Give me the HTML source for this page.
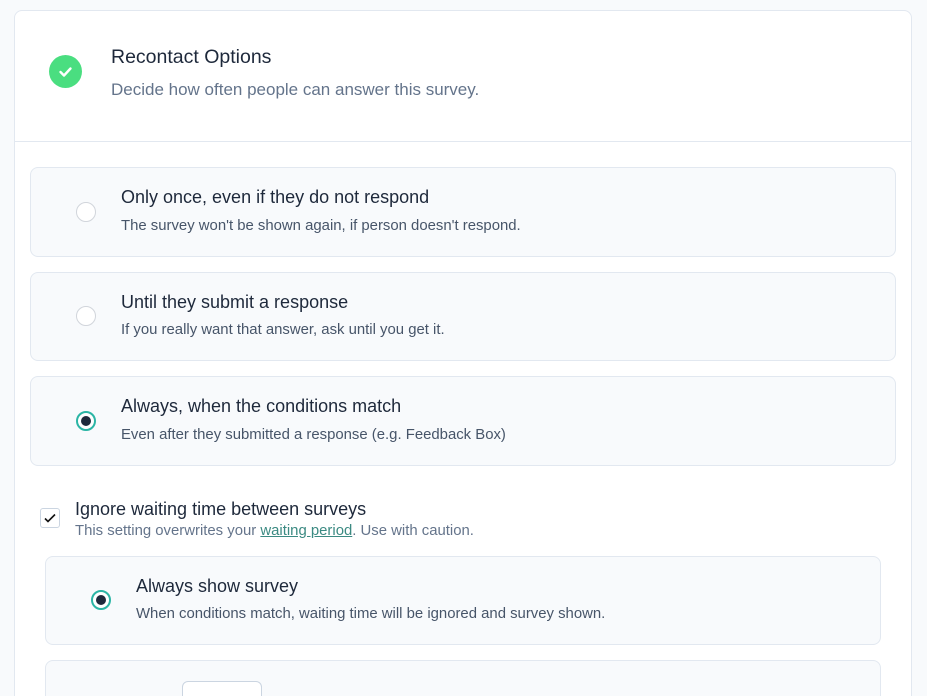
<!DOCTYPE html>
<html><head><meta charset="utf-8"><style>
*{box-sizing:border-box;margin:0;padding:0}
html,body{width:927px;height:696px;overflow:hidden}
body{background:#f8fafc;font-family:"Liberation Sans",sans-serif;position:relative}
.card{position:absolute;left:14px;top:10px;width:898px;height:720px;background:#fff;border:1px solid #e2e8f0;border-radius:8px}
.hdr{position:absolute;left:0;top:0;width:896px;height:131px;border-bottom:1px solid #e2e8f0}
.chk{position:absolute;left:34px;top:44px;width:33px;height:33px;border-radius:50%;background:#4ade80}
.abs{position:absolute;white-space:nowrap}
.box{position:absolute;background:#f8fafc;border:1px solid #e2e8f0;border-radius:8px}
.radio{position:absolute;width:20px;height:20px;border-radius:50%;border:1px solid #d1d5db;background:#fff}
.radio.on{border:2px solid #2bb5a5}
.radio.on::after{content:"";position:absolute;left:3px;top:3px;width:10px;height:10px;border-radius:50%;background:#1e293b}
.t{font-size:18px;color:#1e293b;font-weight:500}
.d{font-size:14.9px;color:#475569}
</style></head><body>
<div class="card">
 <div class="hdr">
  <div class="chk"><svg width="33" height="33" viewBox="0 0 33 33"><path d="M11.5 17l3.5 3.5 6.5-7" stroke="#fff" stroke-width="2.4" fill="none" stroke-linecap="round" stroke-linejoin="round"/></svg></div>
  <div class="abs" style="left:96px;top:35px;font-size:19.5px;color:#1e293b;font-weight:500">Recontact Options</div>
  <div class="abs" style="left:96px;top:69px;font-size:17px;color:#64748b">Decide how often people can answer this survey.</div>
 </div>
</div>
<div class="box" style="left:30px;top:167px;width:866px;height:90px"></div>
<div class="radio" style="left:76px;top:202px"></div>
<div class="abs t" style="left:121px;top:187px">Only once, even if they do not respond</div>
<div class="abs d" style="left:121px;top:218px">The survey won't be shown again, if person doesn't respond.</div>

<div class="box" style="left:30px;top:272px;width:866px;height:89px"></div>
<div class="radio" style="left:76px;top:306px"></div>
<div class="abs t" style="left:121px;top:292px">Until they submit a response</div>
<div class="abs d" style="left:121px;top:322px">If you really want that answer, ask until you get it.</div>

<div class="box" style="left:30px;top:376px;width:866px;height:90px"></div>
<div class="radio on" style="left:76px;top:411px"></div>
<div class="abs t" style="left:121px;top:396px">Always, when the conditions match</div>
<div class="abs d" style="left:121px;top:427px">Even after they submitted a response (e.g. Feedback Box)</div>

<div class="abs" style="left:40px;top:508px;width:20px;height:20px;border:1px solid #cbd5e1;border-radius:3px;background:#fff"><svg width="18" height="18" viewBox="0 0 18 18"><path d="M4 9.5l3 3 7-7" stroke="#111" stroke-width="1.6" fill="none"/></svg></div>
<div class="abs t" style="left:75px;top:499px">Ignore waiting time between surveys</div>
<div class="abs d" style="left:75px;top:523px;color:#64748b">This setting overwrites your <span style="text-decoration:underline;color:#3b8a82">waiting period</span>. Use with caution.</div>

<div class="box" style="left:45px;top:556px;width:836px;height:89px"></div>
<div class="radio on" style="left:91px;top:590px"></div>
<div class="abs t" style="left:136px;top:576px">Always show survey</div>
<div class="abs d" style="left:136px;top:606px">When conditions match, waiting time will be ignored and survey shown.</div>

<div class="box" style="left:45px;top:660px;width:836px;height:80px"></div>
<div class="abs" style="left:182px;top:681px;width:80px;height:40px;border:1px solid #cbd5e1;border-radius:6px;background:#fff"></div>
</body></html>
